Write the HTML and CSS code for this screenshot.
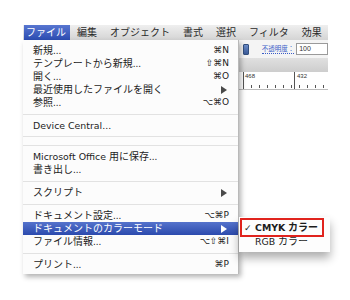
FILE: index.html
```html
<!DOCTYPE html>
<html lang="ja">
<head>
<meta charset="utf-8">
<link rel="stylesheet" href="styles.css">
</head>
<body>
<div class="screen">
  <div class="menubar">
    <span class="mb-item active">ファイル</span>
    <span class="mb-item edit">編集</span>
    <span class="mb-item">オブジェクト</span>
    <span class="mb-item">書式</span>
    <span class="mb-item">選択</span>
    <span class="mb-item">フィルタ</span>
    <span class="mb-item">効果</span>
  </div>
  <div class="stage">
    <div class="app">
      <div class="tb1">
        <span class="tb-btn"></span>
        <span class="tb-label">不透明度：</span>
        <span class="tb-input">100</span>
      </div>
      <div class="tb2"></div>
      <div class="ruler">
        <span class="rl-num n1">468</span>
        <span class="rl-num n2">432</span>
        <span class="rl-line l1"></span>
        <span class="rl-line l2"></span>
      </div>
    </div>

    <div class="menu">
      <div class="item"><span>新規...</span><span class="sc">⌘N</span></div>
      <div class="item"><span>テンプレートから新規...</span><span class="sc">⇧⌘N</span></div>
      <div class="item"><span>開く...</span><span class="sc">⌘O</span></div>
      <div class="item"><span>最近使用したファイルを開く</span><span class="arrow"></span></div>
      <div class="item"><span>参照...</span><span class="sc">⌥⌘O</span></div>
      <div class="sep"></div>
      <div class="item"><span class="lt">Device Central...</span></div>
      <div class="sep sm"></div>
      <div class="sep sm"></div>
      <div class="item"><span><span class="lt">Microsoft Office </span>用に保存...</span></div>
      <div class="item"><span>書き出し...</span></div>
      <div class="sep"></div>
      <div class="item"><span>スクリプト</span><span class="arrow"></span></div>
      <div class="sep"></div>
      <div class="item"><span>ドキュメント設定...</span><span class="sc">⌥⌘P</span></div>
      <div class="item hl"><span>ドキュメントのカラーモード</span><span class="arrow"></span></div>
      <div class="item"><span>ファイル情報...</span><span class="sc">⌥⇧⌘I</span></div>
      <div class="sep"></div>
      <div class="item"><span>プリント...</span><span class="sc">⌘P</span></div>
    </div>

    <div class="submenu">
      <div class="sub-item checked"><span class="check">✓</span><span><span class="lt">CMYK</span> カラー</span></div>
      <div class="sub-item"><span class="check"></span><span><span class="lt">RGB</span> カラー</span></div>
      <div class="redbox"></div>
    </div>
  </div>
</div>
</body>
</html>
```

FILE: styles.css
```css
html, body {
  margin: 0;
  padding: 0;
  background: #ffffff;
}

body {
  width: 350px;
  height: 300px;
  overflow: hidden;
  font-family: "Liberation Sans", "Noto Sans CJK JP", "DejaVu Sans", sans-serif;
  color: #1c1c1c;
}

.screen {
  padding: 25px 0 0 23px;
  width: 305px;
}

/* menu bar */
.menubar {
  display: flex;
  align-items: center;
  height: 15px;
  width: 305px;
  padding-left: 1px;
  box-sizing: border-box;
  gap: 13px;
  background: linear-gradient(#efefef, #d4d4d4);
  font-size: 10px;
  line-height: 15px;
}

.mb-item {
  color: #2a2a2a;
  white-space: nowrap;
}

.mb-item.active {
  background: linear-gradient(#5876d0, #2c4cb2);
  color: #ffffff;
  padding: 0 4px 0 2px;
}

.mb-item.edit {
  margin-left: -6px;
}

/* stage under the menu bar */
.stage {
  position: relative;
  width: 305px;
}

.app {
  width: 305px;
}

.tb1 {
  height: 18px;
  display: flex;
  align-items: center;
  padding-left: 220px;
  background: #f4f4f4;
  box-sizing: border-box;
}

.tb-btn {
  width: 6px;
  height: 11px;
  border-radius: 1px;
  background: linear-gradient(#6c8cc8, #3a5a98);
  border: 1px solid #33507f;
  box-sizing: border-box;
}

.tb-label {
  margin-left: 13px;
  font-size: 6.5px;
  color: #3a5cc8;
  border-bottom: 1px dotted #3a5cc8;
  line-height: 8px;
  white-space: nowrap;
}

.tb-input {
  margin-left: 2px;
  width: 34px;
  height: 12px;
  border: 1px solid #9a9a9a;
  background: #ffffff;
  font-size: 7px;
  line-height: 10px;
  padding-left: 2px;
  box-sizing: border-box;
  color: #333;
}

.tb2 {
  height: 14px;
  background: linear-gradient(#e0e0e0, #cdcdcd);
}

.ruler {
  position: relative;
  height: 17px;
  background:
    repeating-linear-gradient(90deg, #555 0 1px, transparent 1px 8px) 228px 13px / 100% 3px no-repeat,
    #ffffff;
  border-bottom: 1px solid #bdbdbd;
}

.rl-num {
  position: absolute;
  top: 1px;
  font-size: 6px;
  line-height: 7px;
  color: #333;
}

.n1 { left: 222px; }
.n2 { left: 274px; }

.rl-line {
  position: absolute;
  top: 0;
  width: 1px;
  height: 17px;
  background: #555;
}

.l1 { left: 220px; }
.l2 { left: 271px; }

/* main menu */
.menu {
  position: absolute;
  left: 0;
  top: 0;
  width: 216px;
  padding: 4px 0 3px;
  box-sizing: border-box;
  background: #fcfcfc;
  border-right: 1px solid #b9b9b9;
  box-shadow: 2px 3px 5px rgba(0, 0, 0, 0.3);
  font-size: 10px;
}

.lt {
  font-family: "DejaVu Sans", sans-serif;
  font-size: 9.4px;
}

.item {
  display: flex;
  align-items: center;
  height: 13px;
  line-height: 13px;
  padding: 0 9px 0 10px;
  white-space: nowrap;
}

.item.hl {
  background: linear-gradient(#5573cc, #2b4aad);
  color: #ffffff;
}

.sc {
  margin-left: auto;
  font-family: "DejaVu Sans", sans-serif;
  font-size: 9px;
  color: #222;
}

.arrow {
  margin-left: auto;
  margin-right: 2px;
  width: 0;
  height: 0;
  border-top: 4px solid transparent;
  border-bottom: 4px solid transparent;
  border-left: 6px solid #4a4a4a;
}

.item.hl .arrow {
  border-left-color: #ffffff;
}

.sep {
  height: 10px;
  background: linear-gradient(transparent 5px, #e2e2e2 5px, #e2e2e2 6px, transparent 6px);
}

.sep.sm {
  height: 9px;
  background: linear-gradient(transparent 4px, #e2e2e2 4px, #e2e2e2 5px, transparent 5px);
}

/* submenu */
.submenu {
  position: absolute;
  left: 216px;
  top: 177px;
  width: 91px;
  padding: 4px 0 3px;
  box-sizing: border-box;
  background: #fdfdfd;
  box-shadow: 0 6px 9px rgba(0, 0, 0, 0.32);
  font-size: 10px;
}

.sub-item {
  display: flex;
  align-items: center;
  height: 14px;
  line-height: 14px;
  white-space: nowrap;
  padding-left: 5px;
}

.check {
  width: 11px;
  font-family: "DejaVu Sans", sans-serif;
  font-size: 9px;
}

.sub-item.checked {
  font-weight: bold;
}

.redbox {
  position: absolute;
  left: 1px;
  top: 1px;
  width: 84px;
  height: 19px;
  border: 2px solid #e0231d;
  box-sizing: border-box;
}
```
